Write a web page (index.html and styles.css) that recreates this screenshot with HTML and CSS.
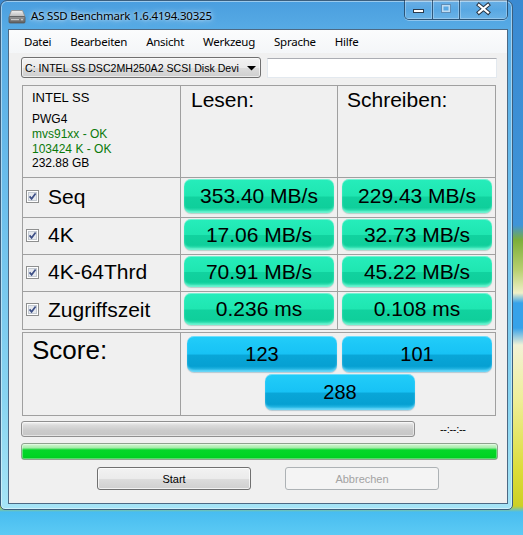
FILE: index.html
```html
<!DOCTYPE html>
<html>
<head>
<meta charset="utf-8">
<title>AS SSD Benchmark</title>
<link rel="stylesheet" href="styles.css">
</head>
<body>
<div class="window">
  <div class="titlebar">
    <svg class="appicon" width="18" height="14" viewBox="0 0 18 14">
      <defs>
        <linearGradient id="hdtop" x1="0" y1="0" x2="0" y2="1"><stop offset="0" stop-color="#f2f2f2"/><stop offset="1" stop-color="#b8b8b8"/></linearGradient>
        <linearGradient id="hdfront" x1="0" y1="0" x2="0" y2="1"><stop offset="0" stop-color="#9a9a9a"/><stop offset="1" stop-color="#5e5e5e"/></linearGradient>
      </defs>
      <path d="M3.5 0.5 H14.5 L17 6.5 H1 Z" fill="url(#hdtop)" stroke="#8a8a8a" stroke-width="0.8"/>
      <rect x="1" y="6.5" width="16" height="6.5" rx="1" fill="url(#hdfront)" stroke="#555" stroke-width="0.8"/>
      <rect x="3" y="9" width="8" height="1.2" fill="#c8c8c8"/>
      <circle cx="14" cy="9.6" r="0.9" fill="#d8d8d8"/>
    </svg>
    <span class="title">AS SSD Benchmark 1.6.4194.30325</span>
    <div class="controls">
      <div class="ctl ctl-min">
        <svg width="27" height="18" viewBox="0 0 27 18"><rect x="8.5" y="9.5" width="10" height="3" fill="#ffffff" stroke="#2c3b4c" stroke-width="1"/></svg>
      </div>
      <div class="ctl ctl-max">
        <svg width="26" height="18" viewBox="0 0 26 18"><rect x="8.5" y="4.5" width="9" height="8" fill="none" stroke="#5f8db5" stroke-width="1"/><rect x="9.75" y="5.75" width="6.5" height="5.5" fill="none" stroke="#bfdcf2" stroke-width="1.5"/></svg>
      </div>
      <div class="ctl ctl-close">
        <svg width="47" height="18" viewBox="0 0 47 18"><path d="M19 5 L28 12.5 M28 5 L19 12.5" stroke="#2a3645" stroke-width="4.2" stroke-linecap="square" fill="none"/><path d="M19 5 L28 12.5 M28 5 L19 12.5" stroke="#ffffff" stroke-width="2.2" stroke-linecap="square" fill="none"/></svg>
      </div>
    </div>
  </div>
  <div class="client">
    <div class="menubar">
      <span class="menuitem">Datei</span>
      <span class="menuitem">Bearbeiten</span>
      <span class="menuitem">Ansicht</span>
      <span class="menuitem">Werkzeug</span>
      <span class="menuitem">Sprache</span>
      <span class="menuitem">Hilfe</span>
    </div>
    <div class="toolbar">
      <div class="combo">
        <span class="combo-text">C: INTEL SS DSC2MH250A2 SCSI Disk Devi</span>
        <svg class="combo-arrow" width="9" height="5" viewBox="0 0 9 5"><path d="M0 0 H9 L4.5 4.5 Z" fill="#000"/></svg>
      </div>
      <div class="textbox"></div>
    </div>
    <div class="results">
      <div class="cell info">
        <div class="info-model">INTEL SS</div>
        <div class="info-line">PWG4</div>
        <div class="info-line ok">mvs91xx - OK</div>
        <div class="info-line ok">103424 K - OK</div>
        <div class="info-line">232.88 GB</div>
      </div>
      <div class="cell head head-read">Lesen:</div>
      <div class="cell head head-write">Schreiben:</div>

      <div class="cell label"><svg class="check" width="13" height="13" viewBox="0 0 13 13"><rect x="0.5" y="0.5" width="12" height="12" fill="#fff" stroke="#8e8f8f"/><rect x="2.5" y="2.5" width="8" height="8" fill="#e6e9ee" stroke="#c4cad2"/><path d="M3.6 6.4 L5.6 8.8 L9.6 3.6" stroke="#3d4f86" stroke-width="1.7" fill="none"/></svg><span>Seq</span></div>
      <div class="cell val val-read"><div class="vbox">353.40 MB/s</div></div>
      <div class="cell val val-write"><div class="vbox">229.43 MB/s</div></div>

      <div class="cell label"><svg class="check" width="13" height="13" viewBox="0 0 13 13"><rect x="0.5" y="0.5" width="12" height="12" fill="#fff" stroke="#8e8f8f"/><rect x="2.5" y="2.5" width="8" height="8" fill="#e6e9ee" stroke="#c4cad2"/><path d="M3.6 6.4 L5.6 8.8 L9.6 3.6" stroke="#3d4f86" stroke-width="1.7" fill="none"/></svg><span>4K</span></div>
      <div class="cell val val-read"><div class="vbox">17.06 MB/s</div></div>
      <div class="cell val val-write"><div class="vbox">32.73 MB/s</div></div>

      <div class="cell label"><svg class="check" width="13" height="13" viewBox="0 0 13 13"><rect x="0.5" y="0.5" width="12" height="12" fill="#fff" stroke="#8e8f8f"/><rect x="2.5" y="2.5" width="8" height="8" fill="#e6e9ee" stroke="#c4cad2"/><path d="M3.6 6.4 L5.6 8.8 L9.6 3.6" stroke="#3d4f86" stroke-width="1.7" fill="none"/></svg><span>4K-64Thrd</span></div>
      <div class="cell val val-read"><div class="vbox">70.91 MB/s</div></div>
      <div class="cell val val-write"><div class="vbox">45.22 MB/s</div></div>

      <div class="cell label"><svg class="check" width="13" height="13" viewBox="0 0 13 13"><rect x="0.5" y="0.5" width="12" height="12" fill="#fff" stroke="#8e8f8f"/><rect x="2.5" y="2.5" width="8" height="8" fill="#e6e9ee" stroke="#c4cad2"/><path d="M3.6 6.4 L5.6 8.8 L9.6 3.6" stroke="#3d4f86" stroke-width="1.7" fill="none"/></svg><span>Zugriffszeit</span></div>
      <div class="cell val val-read"><div class="vbox">0.236 ms</div></div>
      <div class="cell val val-write"><div class="vbox">0.108 ms</div></div>
    </div>
    <div class="scores">
      <div class="cell score-label">Score:</div>
      <div class="cell score-vals">
        <div class="sbox">123</div>
        <div class="sbox">101</div>
        <div class="sbox sbox-total">288</div>
      </div>
    </div>
    <div class="progress-row">
      <div class="bar bar-gray"></div>
      <span class="eta">--:--:--</span>
    </div>
    <div class="bar bar-green"></div>
    <div class="buttons">
      <button class="btn">Start</button>
      <button class="btn" disabled>Abbrechen</button>
    </div>
  </div>
</div>
</body>
</html>
```

FILE: styles.css
```css
html, body {
  margin: 0;
  padding: 0;
}

body {
  width: 523px;
  height: 535px;
  overflow: hidden;
  font-family: "Liberation Sans", Arial, sans-serif;
  background: linear-gradient(to bottom,
    #3a8ad2 0px, #3f94d8 225px, #7cae3a 240px, #b8d070 270px, #f0f0c8 293px,
    #36a2ea 303px, #36a2ea 328px, #f2f2d6 345px, #eeee98 400px, #dcdc3a 470px,
    #cdd024 506px, #48bdf0 512px, #5ccaf4 535px);
}

.window {
  width: 513px;
  height: 510px;
  box-sizing: border-box;
  border: 1px solid #3b5f7f;
  border-radius: 7px 7px 5px 5px;
  background: linear-gradient(to bottom, #4a9edf 0%, #58ace5 6%, #6cbfec 40%, #88d4f1 78%, #a6e4f6 100%);
  box-shadow: inset 0 0 0 1px rgba(255, 255, 255, 0.45);
  padding: 0 4px 5px 7px;
  display: flex;
  flex-direction: column;
}

.titlebar {
  height: 28px;
  display: flex;
  align-items: center;
  flex: none;
}

.appicon {
  margin-left: 0;
  margin-top: 3px;
  flex: none;
}

.title {
  margin-left: 5px;
  margin-top: 1px;
  font-family: "Noto Sans", "Open Sans", sans-serif;
  font-size: 11.5px;
  letter-spacing: -0.2px;
  color: #000;
  text-shadow: 0 0 6px rgba(255, 255, 255, 0.9), 0 0 3px rgba(255, 255, 255, 0.6);
}

.controls {
  margin-left: auto;
  align-self: flex-start;
  margin-top: -1px;
  display: flex;
  height: 20px;
  box-sizing: border-box;
  border: 1px solid rgba(28, 52, 78, 0.7);
  border-top: none;
  border-radius: 0 0 5px 5px;
  overflow: hidden;
  box-shadow: 0 1px 0 rgba(255, 255, 255, 0.35);
}

.ctl {
  height: 19px;
  background: linear-gradient(to bottom, rgba(255, 255, 255, 0.18), rgba(255, 255, 255, 0.06) 50%, rgba(255, 255, 255, 0.14));
  box-shadow: inset 0 0 0 1px rgba(255, 255, 255, 0.28);
  display: flex;
}

.ctl svg {
  display: block;
}

.ctl-min {
  width: 27px;
  border-right: 1px solid rgba(28, 52, 78, 0.7);
}

.ctl-max {
  width: 26px;
  border-right: 1px solid rgba(28, 52, 78, 0.7);
}

.ctl-close {
  width: 47px;
}

.client {
  flex: 1;
  background: #f0f0f0;
  border: 1px solid #4d6984;
  display: flex;
  flex-direction: column;
}

.menubar {
  height: 23px;
  flex: none;
  background: linear-gradient(to bottom, #fbfcfd, #f4f6f8);
  display: flex;
  align-items: center;
  padding-left: 15px;
  gap: 19px;
  font-family: "Noto Sans", "Open Sans", sans-serif;
  font-size: 11.5px;
  letter-spacing: -0.25px;
  color: #000;
}

.toolbar {
  display: flex;
  margin: 4px 0 7px 12px;
  flex: none;
}

.combo {
  width: 240px;
  height: 21px;
  box-sizing: border-box;
  border: 1px solid #707070;
  border-radius: 3px;
  background: linear-gradient(to bottom, #f2f2f2 0%, #ebebeb 50%, #dddddd 51%, #cfcfcf 100%);
  box-shadow: inset 0 0 0 1px rgba(255, 255, 255, 0.6);
  display: flex;
  align-items: center;
  padding-left: 3px;
  font-size: 10.6px;
  color: #000;
}

.combo-text {
  flex: 1;
  white-space: nowrap;
}

.combo-arrow {
  flex: none;
  margin: 1px 4px 0 4px;
}

.textbox {
  width: 230px;
  height: 20px;
  box-sizing: border-box;
  margin: 1px 0 0 6px;
  background: #fff;
  border: 1px solid #e3e9ef;
  border-top-color: #abadb3;
}

.results {
  margin-left: 13px;
  display: grid;
  grid-template-columns: 158px 157px 158px;
  grid-template-rows: 92px 40px 37px 37px 38px;
  border-left: 1px solid #a0a0a0;
  border-top: 1px solid #a0a0a0;
  width: 474px;
  box-sizing: border-box;
  flex: none;
}

.cell {
  box-sizing: border-box;
  border-right: 1px solid #a0a0a0;
  border-bottom: 1px solid #a0a0a0;
}

.info {
  padding: 4px 0 0 9px;
  color: #000;
}

.info-model {
  font-size: 13px;
  line-height: 15px;
  margin-bottom: 7px;
}

.info-line {
  font-size: 12px;
  line-height: 14.8px;
}

.info-line.ok {
  color: #0a7a0a;
}

.head {
  font-size: 21px;
  line-height: 24px;
  padding-top: 2px;
  color: #000;
}

.head-read {
  padding-left: 10px;
}

.head-write {
  padding-left: 9px;
}

.label {
  display: flex;
  align-items: center;
  padding-left: 3px;
  font-size: 21px;
  color: #000;
}

.label span {
  margin-top: -2px;
}

.label .check {
  flex: none;
  margin-right: 9px;
  margin-top: -2px;
}

.val {
  padding-top: 1px;
}

.val-read {
  padding-left: 3px;
}

.val-write {
  padding-left: 4px;
}

.vbox {
  width: 150px;
  height: calc(100% - 4px);
  box-sizing: border-box;
  border-radius: 7px;
  background: linear-gradient(to bottom, #26edbb 0%, #1fe6b1 50%, #11d29f 53%, #0fcf9b 84%, #40e9bf 100%);
  box-shadow: inset 0 -2px 2px rgba(150, 255, 225, 0.55), inset 0 1px 0 rgba(255, 255, 255, 0.35), 0 1px 1px rgba(0, 110, 80, 0.25);
  display: flex;
  align-items: center;
  justify-content: center;
  font-size: 21px;
  color: #000;
}

.scores {
  margin: 2px 0 0 13px;
  display: grid;
  grid-template-columns: 158px 315px;
  grid-template-rows: 83px;
  border-left: 1px solid #a0a0a0;
  border-top: 1px solid #a0a0a0;
  width: 474px;
  box-sizing: border-box;
  flex: none;
}

.score-label {
  font-size: 26px;
  line-height: 30px;
  padding: 2px 0 0 9px;
  color: #000;
}

.score-vals {
  display: flex;
  flex-wrap: wrap;
  align-content: flex-start;
  padding: 3px 0 0 6px;
  column-gap: 5px;
  row-gap: 2px;
}

.sbox {
  width: 150px;
  height: 36px;
  box-sizing: border-box;
  border-radius: 7px;
  background: linear-gradient(to bottom, #22cdf9 0%, #17c2f5 50%, #09a6d8 53%, #06a0d2 84%, #3ac8f2 100%);
  box-shadow: inset 0 -2px 2px rgba(150, 230, 255, 0.55), inset 0 1px 0 rgba(255, 255, 255, 0.35), 0 1px 1px rgba(0, 80, 120, 0.25);
  display: flex;
  align-items: center;
  justify-content: center;
  font-size: 20px;
  color: #000;
}

.sbox-total {
  margin-left: 78px;
}

.progress-row {
  display: flex;
  align-items: center;
  height: 16px;
  margin: 5px 0 0 12px;
  flex: none;
}

.bar {
  box-sizing: border-box;
  border-radius: 3px;
  flex: none;
}

.bar-gray {
  width: 394px;
  height: 16px;
  border: 1px solid #8f8f8f;
  background: linear-gradient(to bottom, #f2f2f2 0%, #dadada 25%, #cbcbcb 60%, #c6c6c6 100%);
  box-shadow: inset 0 0 0 1px rgba(255, 255, 255, 0.5);
}

.eta {
  margin-left: 25px;
  font-size: 11px;
  line-height: 12px;
  color: #000;
  letter-spacing: -0.3px;
}

.bar-green {
  width: 477px;
  height: 17px;
  margin: 6px 0 0 12px;
  border: 1px solid #8fa38f;
  background: linear-gradient(to bottom, #d6f8d6 0%, #a6ecaa 25%, #05d62a 40%, #00d424 80%, #00c820 100%);
  box-shadow: inset 0 0 0 1px rgba(255, 255, 255, 0.35);
}

.buttons {
  display: flex;
  gap: 34px;
  margin: 7px 0 0 88px;
  flex: none;
}

.btn {
  width: 154px;
  height: 23px;
  box-sizing: border-box;
  margin: 0;
  padding: 0;
  border: 1px solid #707070;
  border-radius: 3px;
  background: linear-gradient(to bottom, #f2f2f2 0%, #ebebeb 50%, #dddddd 51%, #cfcfcf 100%);
  box-shadow: inset 0 0 0 1px rgba(255, 255, 255, 0.7);
  font-family: "Liberation Sans", Arial, sans-serif;
  font-size: 11px;
  color: #000;
}

.btn:disabled {
  border-color: #adb2b5;
  background: #f4f4f4;
  box-shadow: none;
  color: #a3a3a3;
}
```
